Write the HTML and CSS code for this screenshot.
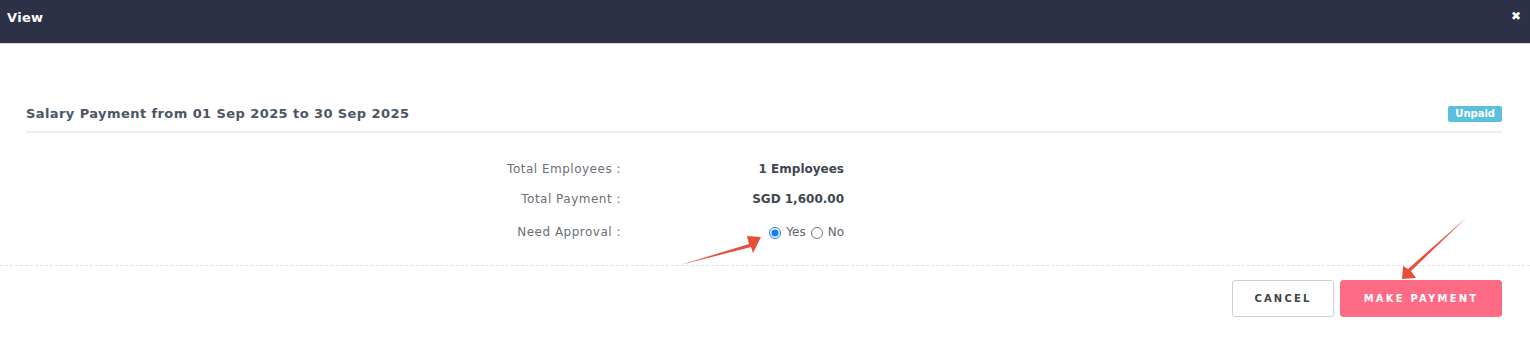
FILE: index.html
```html
<!DOCTYPE html>
<html lang="en">
<head>
    <meta charset="UTF-8">
    <meta name="viewport" content="width=device-width, initial-scale=1.0">
    <title>View</title>
    <link rel="stylesheet" href="styles.css">
</head>
<body>
    <div class="modal">
        <div class="modal-header">
            <span class="modal-title">View</span>
            <span class="close">&#10006;</span>
        </div>
        <div class="modal-body">
            <div class="panel-title">
                <h4>Salary Payment from 01 Sep 2025 to 30 Sep 2025</h4>
                <span class="badge">Unpaid</span>
            </div>
            <div class="info-row">
                <div class="info-label">Total Employees :</div>
                <div class="info-value">1 Employees</div>
            </div>
            <div class="info-row">
                <div class="info-label">Total Payment :</div>
                <div class="info-value">SGD 1,600.00</div>
            </div>
            <div class="info-row radio-row">
                <div class="info-label">Need Approval :</div>
                <div class="info-value">
                    <label class="radio"><input type="radio" name="approval" checked> Yes</label>
                    <label class="radio"><input type="radio" name="approval"> No</label>
                </div>
            </div>
        </div>
        <div class="modal-footer">
            <button class="btn btn-default">Cancel</button>
            <button class="btn btn-pink">Make Payment</button>
        </div>
    </div>

    <svg class="annotations" width="1530" height="349" viewBox="0 0 1530 349">
        <polygon fill="#e5503b" points="680,265 749,244 747,236 761,237 753,253 751,247"/>
        <polygon fill="#e5503b" points="1467,217 1411,271 1416,278 1402,279 1403,266 1408,269"/>
    </svg>
</body>
</html>
```

FILE: styles.css
```css
body {
    margin: 0;
    font-family: "DejaVu Sans", "Liberation Sans", sans-serif;
    background-color: white;
    color: #4b5563;
}
.modal {
    width: 1530px;
}
.modal-header {
    height: 44px;
    box-sizing: border-box;
    background-color: #2c3148;
    border-bottom: 1px solid #d4d4d8;
    display: flex;
    align-items: center;
    justify-content: space-between;
    padding: 0 9px 8px 7px;
}
.modal-title {
    color: white;
    font-size: 13px;
    font-weight: 700;
    letter-spacing: 0.3px;
}
.close {
    color: white;
    font-size: 12px;
    margin-top: -4px;
}
.modal-body {
    padding: 60px 28px 25px 26px;
    border-bottom: 1px dashed #e2e2e2;
}
.panel-title {
    display: flex;
    justify-content: space-between;
    align-items: center;
    border-bottom: 2px solid #ececec;
    padding-bottom: 9px;
    margin-bottom: 28px;
}
.panel-title h4 {
    margin: 0;
    font-size: 13px;
    font-weight: 700;
    color: #4a5667;
    letter-spacing: 0.42px;
}
.badge {
    background-color: #5bc0de;
    color: white;
    font-size: 10px;
    font-weight: 700;
    padding: 2px 7px 3px;
    border-radius: 2px;
    margin-top: 2px;
}
.info-row {
    display: grid;
    grid-template-columns: 595px 223px;
    font-size: 12px;
    line-height: 16px;
    margin-bottom: 14px;
}
.info-label {
    text-align: right;
    color: #6b7079;
    letter-spacing: 0.5px;
}
.info-value {
    text-align: right;
    font-weight: 700;
    color: #3f4752;
}
.radio-row {
    padding-top: 3px;
    margin-bottom: 0;
}
.radio-row .info-value {
    font-weight: 400;
    color: #5d6570;
    display: flex;
    justify-content: flex-end;
    align-items: center;
    gap: 5px;
}
.radio {
    display: flex;
    align-items: center;
}
.radio input {
    margin: 1px 5px 0 0;
    width: 12px;
    height: 12px;
    accent-color: #1a7cf5;
}
.modal-footer {
    display: flex;
    justify-content: flex-end;
    gap: 6px;
    padding: 14px 28px 0 0;
}
.btn {
    font-family: "DejaVu Sans", "Liberation Sans", sans-serif;
    font-size: 10px;
    font-weight: 700;
    letter-spacing: 2.2px;
    text-transform: uppercase;
    height: 37px;
    border-radius: 3px;
    cursor: pointer;
}
.btn-default {
    width: 102px;
    background-color: white;
    border: 1px solid #d0d0d0;
    color: #444;
}
.btn-pink {
    width: 162px;
    background-color: #ff6b84;
    border: 1px solid #ff6b84;
    color: white;
}
.annotations {
    position: absolute;
    top: 0;
    left: 0;
    pointer-events: none;
}
```
